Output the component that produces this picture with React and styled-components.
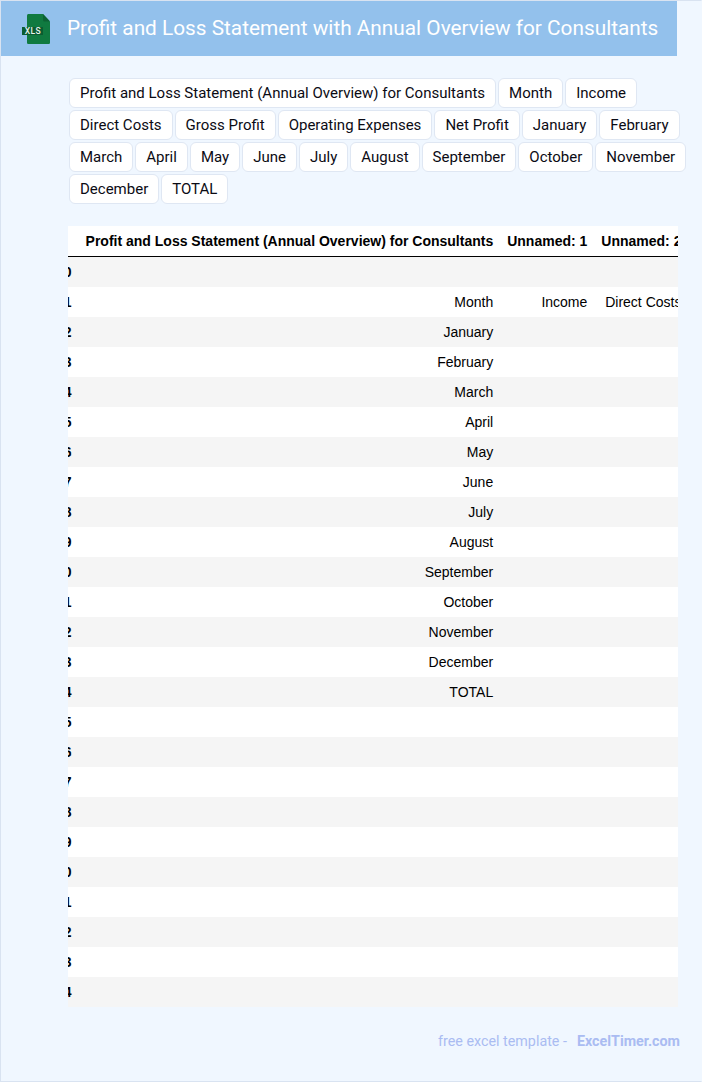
import React from "react";
import styled, { createGlobalStyle } from "styled-components";

const Global = createGlobalStyle`
  html, body { margin: 0; padding: 0; background: #f0f7ff; }
`;

const Page = styled.div`
  box-sizing: border-box;
  width: 702px;
  height: 1082px;
  overflow: hidden;
  background: #f0f7ff;
  border: 1px solid #d9e3f1;
  border-right-color: #f0f7ff;
  font-family: Roboto, sans-serif;
`;

const Header = styled.header`
  box-sizing: border-box;
  width: 676px;
  height: 55px;
  background: #93c1ec;
  display: flex;
  align-items: center;
  padding-left: 20px;
  gap: 13px;
`;

const Title = styled.h1`
  margin: 0;
  font: 400 20.8px/1 Roboto, sans-serif;
  color: #fff;
  white-space: nowrap;
`;

const Chips = styled.div`
  width: 625px;
  margin: 22px 0 0 68px;
  display: flex;
  flex-wrap: wrap;
  gap: 2px;
`;

const Chip = styled.span`
  box-sizing: border-box;
  height: 30px;
  padding: 0 10px;
  display: flex;
  align-items: center;
  background: #fff;
  border: 1px solid #dfe7f3;
  border-radius: 6px;
  font-size: 15px;
  color: #0b0b14;
  white-space: nowrap;
`;

const TableClip = styled.div`
  width: 610px;
  margin: 22px 0 0 67px;
  overflow: hidden;
`;

const Table = styled.table`
  border-collapse: separate;
  border-spacing: 0;
  margin-left: -19px;
  font: 14px "Liberation Sans", Arial, sans-serif;
  color: #000;
  background: #fff;
`;

const HeadCell = styled.th`
  height: 31px;
  box-sizing: border-box;
  padding: 0 7px;
  text-align: right;
  font-weight: 700;
  white-space: nowrap;
  border-bottom: 1px solid #000;
`;

const Row = styled.tr`
  height: 30px;
  background: ${(p) => (p.$odd ? "#fff" : "#f5f5f5")};
`;

const IndexCell = styled.th`
  padding: 0 7px;
  text-align: right;
  font-weight: 700;
  white-space: nowrap;
`;

const Cell = styled.td`
  padding: 0 7px;
  text-align: right;
  white-space: nowrap;
`;

const Footer = styled.footer`
  width: 679px;
  margin-top: 25px;
  display: flex;
  justify-content: flex-end;
  gap: 10px;
  font-size: 14.3px;
  line-height: 18px;
  color: #aabcf2;
`;

const FooterLink = styled.b`
  font-weight: 700;
`;

const FileIcon = () => (
  <svg width="33" height="33" viewBox="0 0 33 33" style={{ flex: "none" }}>
    <path d="M6 3.5C6 2.7 6.7 2 7.5 2H22l7 7.5V30.4c0 .9-.7 1.6-1.6 1.6H7.5C6.7 32 6 31.3 6 30.4Z" fill="#107a40" />
    <path d="M22 2l7 7.5h-5.5A1.5 1.5 0 0 1 22 8Z" fill="#0c6234" />
    <rect x="1" y="15" width="21" height="8" fill="#0a5c31" />
    <text x="12" y="22" textAnchor="middle" fontFamily="Roboto, sans-serif" fontWeight="500" fontSize="8.5" letterSpacing=".4" fill="#e8f3ec">XLS</text>
  </svg>
);

const chips = ["Profit and Loss Statement (Annual Overview) for Consultants","Month","Income","Direct Costs","Gross Profit","Operating Expenses","Net Profit","January","February","March","April","May","June","July","August","September","October","November","December","TOTAL"];
const rows = ["", "Month", "January", "February", "March", "April", "May", "June", "July", "August", "September", "October", "November", "December", "TOTAL"];

export default function App() {
  return (
    <Page>
      <Global />
      <Header>
        <FileIcon />
        <Title>Profit and Loss Statement with Annual Overview for Consultants</Title>
      </Header>
      <Chips>
        {chips.map((c) => <Chip key={c}>{c}</Chip>)}
      </Chips>
      <TableClip>
        <Table>
          <thead>
            <tr>
              <HeadCell />
              <HeadCell>Profit and Loss Statement (Annual Overview) for Consultants</HeadCell>
              <HeadCell>Unnamed: 1</HeadCell>
              <HeadCell>Unnamed: 2</HeadCell>
              <HeadCell>Unnamed: 3</HeadCell>
            </tr>
          </thead>
          <tbody>
            {Array.from({ length: 25 }, (_, i) => (
              <Row key={i} $odd={i % 2 === 1}>
                <IndexCell>{i}</IndexCell>
                <Cell>{rows[i] || ""}</Cell>
                <Cell>{i === 1 ? "Income" : ""}</Cell>
                <Cell>{i === 1 ? "Direct Costs" : ""}</Cell>
                <Cell>{i === 1 ? "Gross Profit" : ""}</Cell>
              </Row>
            ))}
          </tbody>
        </Table>
      </TableClip>
      <Footer>
        <span>free excel template -</span>
        <FooterLink>ExcelTimer.com</FooterLink>
      </Footer>
    </Page>
  );
}
